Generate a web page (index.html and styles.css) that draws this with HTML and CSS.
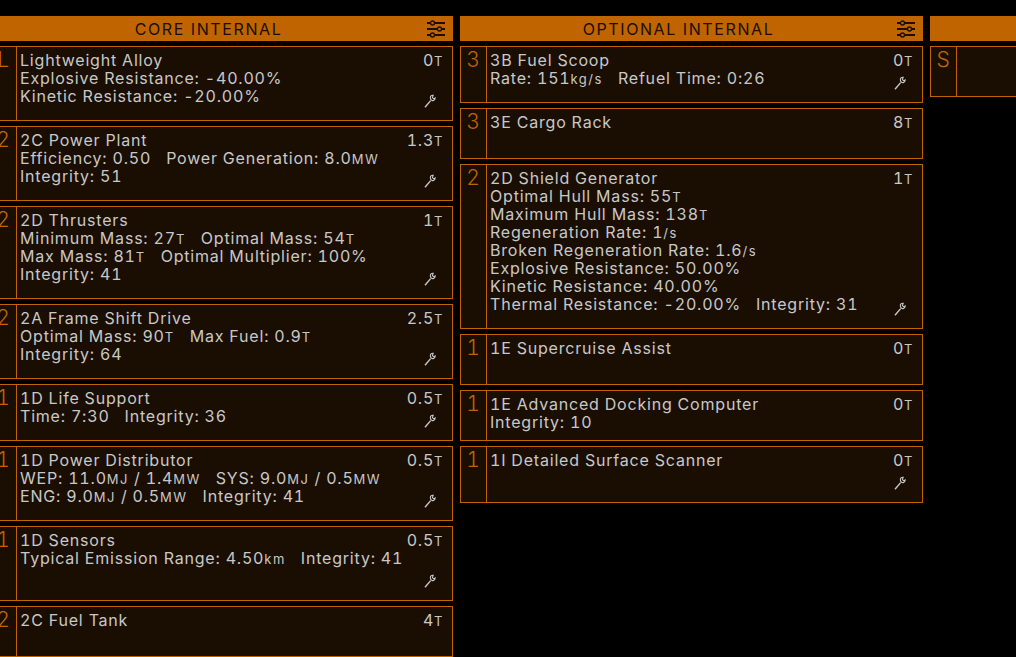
FILE: index.html
```html
<!DOCTYPE html>
<html lang="en">
<head>
<meta charset="utf-8">
<title>Internal modules</title>
<link rel="stylesheet" href="styles.css">
</head>
<body>
<svg class="defs" width="0" height="0" aria-hidden="true">
  <symbol id="sliders" viewBox="0 0 18 18">
    <path d="M0 3h18M0 9h18M0 15h18" stroke="#1a0e02" stroke-width="1.8" fill="none"/>
    <circle cx="5.5" cy="3" r="2" fill="#c06400" stroke="#1a0e02" stroke-width="1.3"/>
    <circle cx="12.5" cy="9" r="2" fill="#c06400" stroke="#1a0e02" stroke-width="1.3"/>
    <circle cx="5.5" cy="15" r="2" fill="#c06400" stroke="#1a0e02" stroke-width="1.3"/>
  </symbol>
  <symbol id="wrench" viewBox="0 0 12 14">
    <path d="M1 13.2 6.6 6.6" stroke="#c8c8c8" stroke-width="1.4" fill="none"/>
    <path d="M9.2 1.2C7.4 1 6 2.4 6.4 4.4 6.6 6 8.2 7 9.6 6.4 10.6 6 11.2 5 11.2 4L9.8 4.8 8.4 3.6Z" fill="none" stroke="#c8c8c8" stroke-width="1.1"/>
  </symbol>
</svg>
<main class="board">
  <section class="column">
    <header class="head"><h2 class="head-title">CORE INTERNAL</h2><span class="head-icon"><svg class="sliders"><use href="#sliders"/></svg></span></header>
    <div class="list">
      <article class="card"><div class="size">L</div><div class="body fitted"><div class="text"><div>Lightweight Alloy</div><div>Explosive Resistance: -40.00%</div><div>Kinetic Resistance: -20.00%</div></div><div class="side"><div>0<span class="unit">T</span></div><svg class="wrench"><use href="#wrench"/></svg></div></div></article>
      <article class="card"><div class="size">2</div><div class="body fitted"><div class="text"><div>2C Power Plant</div><div>Efficiency: 0.50<span class="sep"></span>Power Generation: 8.0<span class="unit">MW</span></div><div>Integrity: 51</div></div><div class="side"><div>1.3<span class="unit">T</span></div><svg class="wrench"><use href="#wrench"/></svg></div></div></article>
      <article class="card"><div class="size">2</div><div class="body fitted"><div class="text"><div>2D Thrusters</div><div>Minimum Mass: 27<span class="unit">T</span><span class="sep"></span>Optimal Mass: 54<span class="unit">T</span></div><div>Max Mass: 81<span class="unit">T</span><span class="sep"></span>Optimal Multiplier: 100%</div><div>Integrity: 41</div></div><div class="side"><div>1<span class="unit">T</span></div><svg class="wrench"><use href="#wrench"/></svg></div></div></article>
      <article class="card"><div class="size">2</div><div class="body fitted"><div class="text"><div>2A Frame Shift Drive</div><div>Optimal Mass: 90<span class="unit">T</span><span class="sep"></span>Max Fuel: 0.9<span class="unit">T</span></div><div>Integrity: 64</div></div><div class="side"><div>2.5<span class="unit">T</span></div><svg class="wrench"><use href="#wrench"/></svg></div></div></article>
      <article class="card"><div class="size">1</div><div class="body fitted"><div class="text"><div>1D Life Support</div><div>Time: 7:30<span class="sep"></span>Integrity: 36</div></div><div class="side"><div>0.5<span class="unit">T</span></div><svg class="wrench"><use href="#wrench"/></svg></div></div></article>
      <article class="card"><div class="size">1</div><div class="body fitted"><div class="text"><div>1D Power Distributor</div><div>WEP: 11.0<span class="unit">MJ</span> / 1.4<span class="unit">MW</span><span class="sep"></span>SYS: 9.0<span class="unit">MJ</span> / 0.5<span class="unit">MW</span></div><div>ENG: 9.0<span class="unit">MJ</span> / 0.5<span class="unit">MW</span><span class="sep"></span>Integrity: 41</div></div><div class="side"><div>0.5<span class="unit">T</span></div><svg class="wrench"><use href="#wrench"/></svg></div></div></article>
      <article class="card"><div class="size">1</div><div class="body fitted"><div class="text"><div>1D Sensors</div><div>Typical Emission Range: 4.50<span class="unit">km</span><span class="sep"></span>Integrity: 41</div><div>&nbsp;</div></div><div class="side"><div>0.5<span class="unit">T</span></div><svg class="wrench"><use href="#wrench"/></svg></div></div></article>
      <article class="card"><div class="size">2</div><div class="body"><div class="text"><div>2C Fuel Tank</div></div><div class="side"><div>4<span class="unit">T</span></div></div></div></article>
    </div>
  </section>
  <section class="column">
    <header class="head"><h2 class="head-title">OPTIONAL INTERNAL</h2><span class="head-icon"><svg class="sliders"><use href="#sliders"/></svg></span></header>
    <div class="list">
      <article class="card"><div class="size">3</div><div class="body fitted"><div class="text"><div>3B Fuel Scoop</div><div>Rate: 151<span class="unit">kg/s</span><span class="sep"></span>Refuel Time: 0:26</div></div><div class="side"><div>0<span class="unit">T</span></div><svg class="wrench"><use href="#wrench"/></svg></div></div></article>
      <article class="card"><div class="size">3</div><div class="body"><div class="text"><div>3E Cargo Rack</div></div><div class="side"><div>8<span class="unit">T</span></div></div></div></article>
      <article class="card"><div class="size">2</div><div class="body fitted"><div class="text"><div>2D Shield Generator</div><div>Optimal Hull Mass: 55<span class="unit">T</span></div><div>Maximum Hull Mass: 138<span class="unit">T</span></div><div>Regeneration Rate: 1<span class="unit">/s</span></div><div>Broken Regeneration Rate: 1.6<span class="unit">/s</span></div><div>Explosive Resistance: 50.00%</div><div>Kinetic Resistance: 40.00%</div><div>Thermal Resistance: -20.00%<span class="sep"></span>Integrity: 31</div></div><div class="side"><div>1<span class="unit">T</span></div><svg class="wrench"><use href="#wrench"/></svg></div></div></article>
      <article class="card"><div class="size">1</div><div class="body"><div class="text"><div>1E Supercruise Assist</div></div><div class="side"><div>0<span class="unit">T</span></div></div></div></article>
      <article class="card"><div class="size">1</div><div class="body"><div class="text"><div>1E Advanced Docking Computer</div><div>Integrity: 10</div></div><div class="side"><div>0<span class="unit">T</span></div></div></div></article>
      <article class="card"><div class="size">1</div><div class="body fitted"><div class="text"><div>1I Detailed Surface Scanner</div><div>&nbsp;</div></div><div class="side"><div>0<span class="unit">T</span></div><svg class="wrench"><use href="#wrench"/></svg></div></div></article>
    </div>
  </section>
  <section class="column">
    <header class="head"></header>
    <div class="list">
      <article class="card"><div class="size">S</div><div class="body"></div></article>
    </div>
  </section>
</main>
</body>
</html>
```

FILE: styles.css
```css
* { box-sizing: border-box; }
html, body { margin: 0; height: 100%; background: #000; overflow: hidden; }
body { font-family: "Inter", "Liberation Sans", sans-serif; font-size: 16px; line-height: 18px; letter-spacing: .8px; font-variant-numeric: tabular-nums; color: #c8c8c8; }
.defs { position: absolute; }
.board { display: flex; gap: 7px; width: 1500px; margin-left: -10px; padding-top: 16px; }
.column { width: 463px; flex: none; }
.head { display: flex; height: 25px; background: #c06400; color: #1a0e02; align-items: center; }
.head-title { flex: 1; margin: 0; font-size: 16px; font-weight: 400; letter-spacing: 1.6px; text-align: center; }
.head-icon { width: 26px; display: flex; }
.sliders { width: 18px; height: 18px; }
.list { display: flex; flex-direction: column; gap: 5px; margin-top: 5px; }
.card { display: flex; min-height: 51px; border: 1px solid #c06400; background: #1a0e02; }
.size { width: 26px; flex: none; border-right: 1px solid #c06400; padding-top: 4px; font-size: 21px; font-weight: 350; color: #c06400; text-align: center; }
.body { flex: 1; display: flex; justify-content: space-between; padding: 4px 8px 4px 3px; }
.fitted { padding-bottom: 15px; }
.side { display: flex; flex-direction: column; align-items: flex-end; justify-content: space-between; gap: 4px; }
.wrench { width: 12px; height: 14px; margin-right: 8px; margin-bottom: -3px; }
.unit { font-size: 13px; line-height: 0; letter-spacing: 1.5px; }
.sep { display: inline-block; width: 15px; height: 0; }
```
